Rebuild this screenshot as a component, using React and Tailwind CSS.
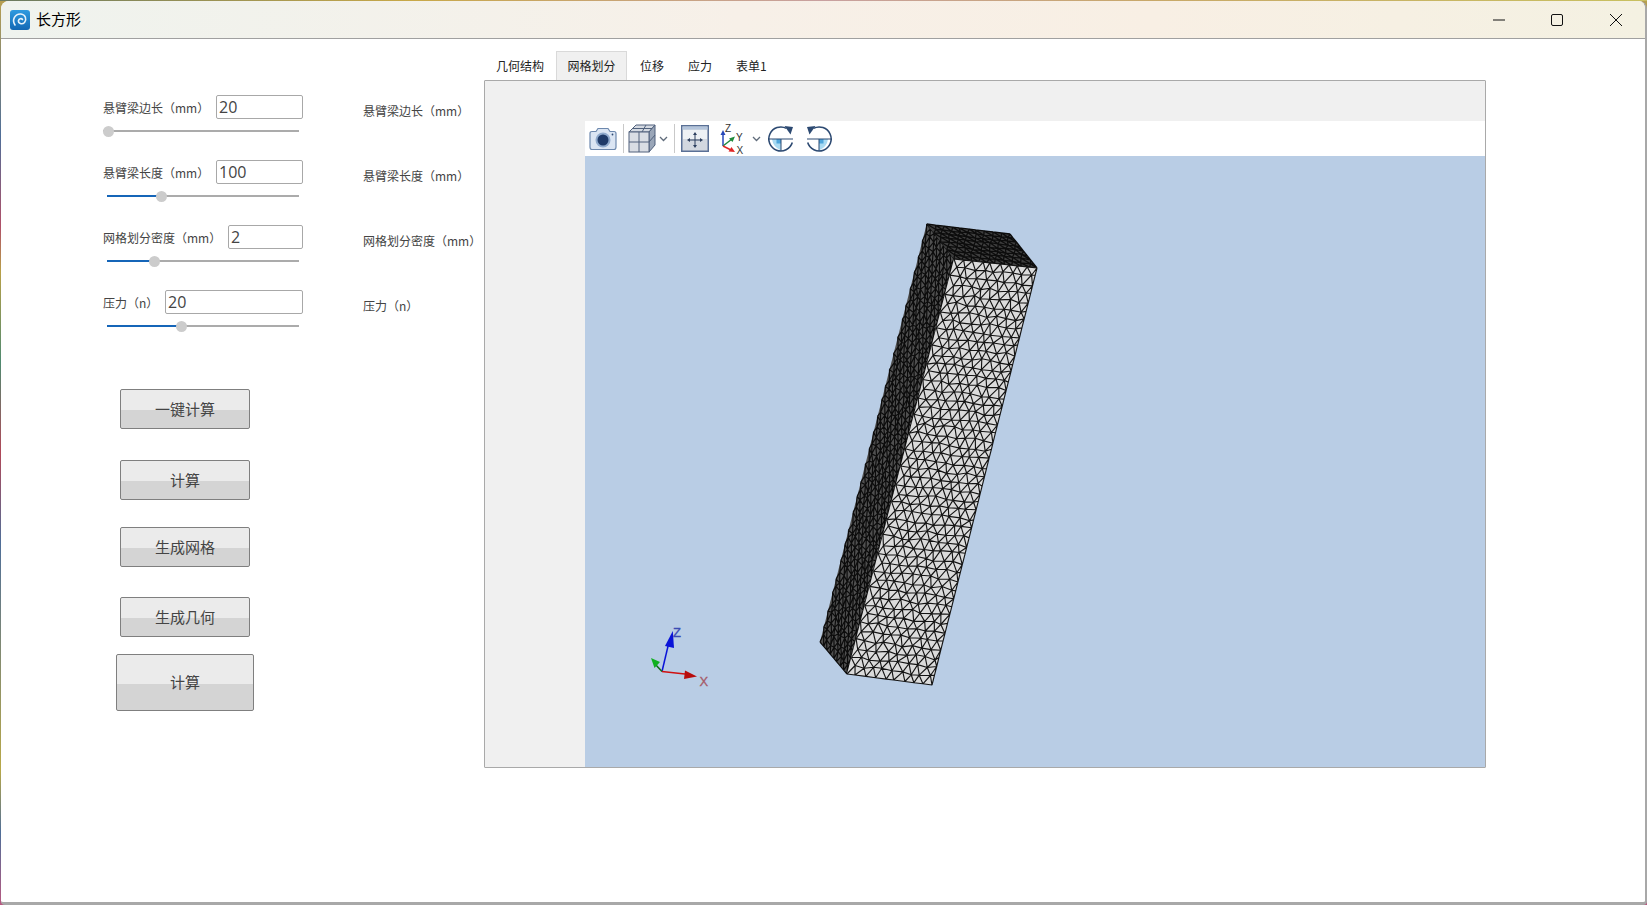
import React from "react";

const cjk = { fontFamily: '"Noto Sans CJK SC", "Noto Sans", sans-serif' };

function rnd(i, j, k) {
  const s = Math.sin(i * 12.9898 + j * 78.233 + k * 37.719) * 43758.5453;
  return s - Math.floor(s) - 0.5;
}

function meshPath(q, nx, ny, jitter, seed) {
  const [A, B, C, D] = q;
  const P = (u, v) => [
    A[0] * (1 - u) * (1 - v) + B[0] * u * (1 - v) + C[0] * u * v + D[0] * (1 - u) * v,
    A[1] * (1 - u) * (1 - v) + B[1] * u * (1 - v) + C[1] * u * v + D[1] * (1 - u) * v,
  ];
  const V = (i, j) => {
    const off = j % 2 ? 0.5 : 0;
    let u = (i + off) / nx;
    let v = j / ny;
    if (u > 1) u = 1;
    const edgeU = u <= 0 || u >= 1;
    const edgeV = j === 0 || j === ny;
    if (!edgeU) u += rnd(i, j, seed) * jitter / nx;
    if (!edgeV) v += rnd(i, j, seed + 1) * jitter / ny;
    const p = P(u, v);
    return p[0].toFixed(1) + " " + p[1].toFixed(1);
  };
  let d = "";
  for (let j = 0; j <= ny; j++) {
    for (let i = 0; i <= nx; i++) {
      const a = V(i, j);
      if (i < nx) d += "M" + a + "L" + V(i + 1, j);
      if (j < ny) {
        d += "M" + a + "L" + V(i, j + 1);
        const k = j % 2 ? i + 1 : i - 1;
        if (k >= 0 && k <= nx) d += "M" + a + "L" + V(k, j + 1);
      }
    }
  }
  return d;
}

const fTop = [[926.7, 224], [1010, 234], [1037, 268], [954, 259]];
const fLeft = [[926.7, 224], [954, 259], [847, 674], [820, 642]];
const fFront = [[954, 259], [1037, 268], [932, 685], [847, 674]];
const poly = (q) => q.map((p) => p.join(",")).join(" ");
const topPath = meshPath(fTop, 10, 8, 0.3, 1);
const leftPath = meshPath(fLeft, 8, 52, 0.4, 3);
const frontPath = meshPath(fFront, 9, 48, 0.35, 5);

function Viewer3D() {
  return (
    <svg className="block w-full h-full" viewBox="585 156 900 611">
      <polygon points={poly(fLeft)} fill="#505050" />
      <path d={leftPath} stroke="#0c0c0c" strokeWidth="1.2" fill="none" />
      <polygon points={poly(fTop)} fill="#3e3e3e" />
      <path d={topPath} stroke="#0c0c0c" strokeWidth="1.3" fill="none" />
      <polygon points={poly(fFront)} fill="#dbdbdb" />
      <path d={frontPath} stroke="#141414" strokeWidth="1.15" fill="none" />
      <line x1="662" y1="671.5" x2="669" y2="642" stroke="#0a14d8" strokeWidth="1.5" />
      <polygon points="672.8,631 674,648 665,646" fill="#0a14d8" />
      <line x1="662" y1="671.5" x2="655" y2="664" stroke="#0d6d14" strokeWidth="1.5" />
      <polygon points="651,658 660,662 654.5,668" fill="#10b020" />
      <line x1="662" y1="671.5" x2="685" y2="674" stroke="#d01010" strokeWidth="1.5" />
      <polygon points="697,676.5 684,679 685,670.5" fill="#b80c0c" />
      <text x="673" y="637" fontSize="13" fill="#3b4cb4" stroke="#3b4cb4" strokeWidth="0.3" fontFamily="Liberation Sans, sans-serif">Z</text>
      <text x="699.5" y="686" fontSize="13" fill="#a65a68" stroke="#a65a68" strokeWidth="0.3" fontFamily="Liberation Sans, sans-serif">X</text>
    </svg>
  );
}

function Slider({ thumb, empty }) {
  const left = empty ? 0 : 4;
  return (
    <div className="relative h-[11px] w-[196px]">
      <div className="absolute top-[4px] right-0 h-[2px] bg-[#ababab]" style={{ left: left }} />
      {!empty && <div className="absolute top-[4px] left-[4px] h-[2px] bg-[#1565b8]" style={{ width: thumb - 4 }} />}
      <div className="absolute top-0 w-[11px] h-[11px] rounded-full bg-[#cccccc]" style={{ left: thumb - 5 }} />
    </div>
  );
}

function ParamRow({ label, value, inputW, thumb, empty }) {
  return (
    <div className="h-[65px]">
      <div className="flex justify-between items-start h-[23px] w-[200px]">
        <span className="text-[12px] mt-px leading-[23px] text-[#444444] whitespace-nowrap" style={cjk}>{label}</span>
        <div
          className="h-[24px] border border-[#a8a8a8] rounded-[2px] pl-[2px] text-[16px] leading-[23px] text-[#444444] font-['Open_Sans',sans-serif]"
          style={{ width: inputW }}
        >
          {value}
        </div>
      </div>
      <div className="mt-[8px]"><Slider thumb={thumb} empty={empty} /></div>
    </div>
  );
}

function Btn({ children, big, cls }) {
  return (
    <button
      className={
        "block border border-[#7f7f7f] rounded-[2px] text-[15px] text-[#444444] bg-[linear-gradient(#ebebeb_52%,#d4d4d4_52%)] " +
        (big ? "w-[138px] h-[57px] " : "w-[130px] h-[40px] ") + cls
      }
      style={cjk}
    >
      {children}
    </button>
  );
}

const navy = "#2d4a72";

function Camera() {
  return (
    <svg width="28" height="24" viewBox="0 0 28 24" className="shrink-0">
      <path d="M1 6.5Q1 4.5 3 4.5H7L9 1.5H19L21 4.5H25Q27 4.5 27 6.5V20Q27 22.5 25 22.5H3Q1 22.5 1 20Z" fill="#dbe5f3" stroke="#6d88ad" strokeWidth="1.2" />
      <circle cx="14" cy="13" r="7.5" fill="#8fa9cc" />
      <circle cx="14" cy="13" r="5.5" fill="#1f3a68" />
      <circle cx="23.5" cy="7.5" r="0.9" fill={navy} />
    </svg>
  );
}

function Cube() {
  return (
    <svg width="29" height="29" viewBox="0 0 29 29" className="shrink-0">
      <path d="M1 8L8 1H27L21 8Z" fill="#d5dae2" stroke="#50617c" />
      <path d="M21 8L27 1V21L21 28Z" fill="#9aa6b8" stroke="#50617c" />
      <rect x="1" y="8" width="20" height="20" fill="#d9dde4" stroke="#50617c" />
      <path d="M1 18H21M11 8V28M4.5 4.5H24M18 1L14 8" stroke="#50617c" fill="none" />
      <path d="M21 18L27 11" stroke="#50617c" fill="none" />
    </svg>
  );
}

function Chevron() {
  return (
    <svg width="9" height="6" viewBox="0 0 9 6" className="shrink-0">
      <path d="M1 1L4.5 4.5L8 1" stroke="#5f6b7a" strokeWidth="1.3" fill="none" />
    </svg>
  );
}

function Pan() {
  return (
    <svg width="28" height="27" viewBox="0 0 28 27" className="shrink-0">
      <rect x="0.75" y="0.75" width="26.5" height="25.5" fill="#d3d8e0" stroke="#5a7096" strokeWidth="1.5" />
      <rect x="1.5" y="1.5" width="25" height="3" fill="#b4c5dc" />
      <rect x="2" y="5" width="24" height="9" fill="#eef1f5" />
      <path d="M14 9V21M8 15H20" stroke="#2d3f5e" strokeWidth="1" />
      <path d="M14 7L12 10H16ZM14 23L12 20H16ZM6 15L9 13V17ZM22 15L19 13V17Z" fill="#2d3f5e" />
    </svg>
  );
}

function Triad() {
  return (
    <svg width="26" height="30" viewBox="0 0 26 30" className="shrink-0">
      <path d="M3 22V10" stroke="#2848b8" strokeWidth="1.5" />
      <path d="M3 6L0.5 11H5.5Z" fill="#2848b8" />
      <path d="M3 22L12 15" stroke="#1f8a3c" strokeWidth="1.5" />
      <path d="M15 12.5L9 14.5L12.5 18Z" fill="#1f8a3c" />
      <path d="M3 22L11 26" stroke="#e02626" strokeWidth="1.5" />
      <path d="M15 28L8.5 27.5L11.5 23Z" fill="#e02626" />
      <text x="5" y="8" fontSize="10" fill="#333" fontFamily="Liberation Sans, sans-serif">Z</text>
      <text x="16" y="17" fontSize="10" fill="#333" fontFamily="Liberation Sans, sans-serif">Y</text>
      <text x="16.5" y="29.5" fontSize="10" fill="#333" fontFamily="Liberation Sans, sans-serif">X</text>
    </svg>
  );
}

function Rotate({ flip }) {
  return (
    <svg width="28" height="28" viewBox="0 0 28 28" className="shrink-0" style={flip ? { transform: "scaleX(-1)" } : undefined}>
      <path d="M14 14H5Q6 22 14 25.5Z" fill="#a9daf2" />
      <rect x="9.5" y="14" width="4.5" height="4.5" fill="#4fa6dc" />
      <path d="M2 14H26" stroke={navy} strokeWidth="1.2" />
      <path d="M14 14V26" stroke={navy} strokeWidth="1" />
      <path d="M25.3 17.5A12 12 0 1 1 19.5 3.4" stroke={navy} strokeWidth="1.6" fill="none" />
      <path d="M17.5 1L26 2L23.5 9.5Z" fill={navy} />
    </svg>
  );
}

function Sep() {
  return <div className="w-px h-[29px] bg-[#c9c9c9] shrink-0" />;
}

function Toolbar() {
  return (
    <div className="h-[35px] bg-white flex items-center pl-[4px]">
      <Camera />
      <div className="ml-[6px]"><Sep /></div>
      <div className="ml-[4px]"><Cube /></div>
      <div className="ml-[2px]"><Chevron /></div>
      <div className="ml-[6px]"><Sep /></div>
      <div className="ml-[6px]"><Pan /></div>
      <div className="ml-[11px]"><Triad /></div>
      <div className="ml-[6px]"><Chevron /></div>
      <div className="ml-[6px]"><Rotate /></div>
      <div className="ml-[10px]"><Rotate flip /></div>
    </div>
  );
}

const tabs = ["几何结构", "网格划分", "位移", "应力", "表单1"];

function AppIcon() {
  return (
    <svg width="20" height="20" viewBox="0 0 20 20" className="shrink-0">
      <defs>
        <linearGradient id="ai" x1="0" y1="0" x2="0" y2="1">
          <stop offset="0" stopColor="#2f9be0" />
          <stop offset="1" stopColor="#1368b4" />
        </linearGradient>
      </defs>
      <rect width="20" height="20" rx="3" fill="url(#ai)" />
      <path d="M5 15C1.5 10 5 3.5 11 4C15.5 4.5 17 9.5 14.5 12.5C12 15 8 13.5 8.5 10.5C9 8.5 11.5 8 12.5 9.5" stroke="#e8f3fb" strokeWidth="1.6" fill="none" strokeLinecap="round" />
    </svg>
  );
}

export default function App() {
  return (
    <div className="w-[1647px] h-[905px] overflow-hidden pt-px pl-px [background:linear-gradient(90deg,#6a7a60,#c8a848_25%,#c8a0a0_50%,#c8a868_70%,#c8c060)_0_0/100%_1px_no-repeat,linear-gradient(180deg,#b8a050,#4f6e98_15%,#b05068_25%,#b8a048_30%,#4f8a70_40%,#b04858_50%,#4f6e98_60%,#b8a848_85%,#4f6e98_92%,#b85880)]">
      <div className="w-[1646px] h-[904px] rounded-t-lg rounded-b-[4px] overflow-hidden bg-white border-r-2 border-b-[3px] border-[#a8a8a8] flex flex-col">
        <div className="h-[38px] shrink-0 border-b border-[#a0a0a0] flex items-center bg-[linear-gradient(90deg,#eff3ee,#f7f0e8_45%,#f8efe4_70%,#f4f1e2)]">
          <div className="ml-[9px]"><AppIcon /></div>
          <span className="ml-[6px] text-[15px] text-black" style={cjk}>长方形</span>
          <svg width="150" height="14" viewBox="0 0 150 14" className="ml-auto mr-[2px]">
            <path d="M0 7H12" stroke="#111" strokeWidth="1" />
            <rect x="58.5" y="1.5" width="11" height="11" rx="1.5" stroke="#111" strokeWidth="1" fill="none" />
            <path d="M117 1L129 13M129 1L117 13" stroke="#111" strokeWidth="1" />
          </svg>
        </div>
        <div className="flex-1 flex">
          <div className="w-[260px] ml-[102px] pt-[56px] shrink-0">
            <ParamRow label="悬臂梁边长（mm）" value="20" inputW={87} thumb={5} empty />
            <ParamRow label="悬臂梁长度（mm）" value="100" inputW={87} thumb={58} />
            <ParamRow label="网格划分密度（mm）" value="2" inputW={75} thumb={51} />
            <ParamRow label="压力（n）" value="20" inputW={138} thumb={78} />
            <div className="pt-[34px]">
              <Btn cls="ml-[17px]">一键计算</Btn>
              <Btn cls="ml-[17px] mt-[31px]">计算</Btn>
              <Btn cls="ml-[17px] mt-[27px]">生成网格</Btn>
              <Btn cls="ml-[17px] mt-[30px]">生成几何</Btn>
              <Btn big cls="ml-[13px] mt-[17px]">计算</Btn>
            </div>
          </div>
          <div className="w-[121px] shrink-0 pt-[60px] text-[12px] text-[#444444] leading-[23px]" style={cjk}>
            <div className="h-[65px] whitespace-nowrap">悬臂梁边长（mm）</div>
            <div className="h-[65px] whitespace-nowrap">悬臂梁长度（mm）</div>
            <div className="h-[65px] whitespace-nowrap">网格划分密度（mm）</div>
            <div className="h-[65px] whitespace-nowrap">压力（n）</div>
          </div>
          <div className="w-[1002px] shrink-0 pt-[12px]">
            <div className="flex h-[29px] text-[12px] text-[#222222]" style={cjk}>
              {tabs.map((t, i) => (
                <div
                  key={t}
                  className={
                    i === 1
                      ? "w-[71px] mr-px border border-b-0 border-[#d9d9d9] bg-[#f0f0f0] leading-[28px] text-center whitespace-nowrap"
                      : "px-[12px] leading-[29px] whitespace-nowrap"
                  }
                >
                  {t}
                </div>
              ))}
            </div>
            <div className="h-[688px] border border-[#a9a9a9] rounded-[1px] bg-[#f0f0f0] pt-[40px] pl-[100px] flex flex-col">
              <Toolbar />
              <div className="flex-1 bg-[#b9cde5] min-h-0"><Viewer3D /></div>
            </div>
          </div>
        </div>
      </div>
    </div>
  );
}
